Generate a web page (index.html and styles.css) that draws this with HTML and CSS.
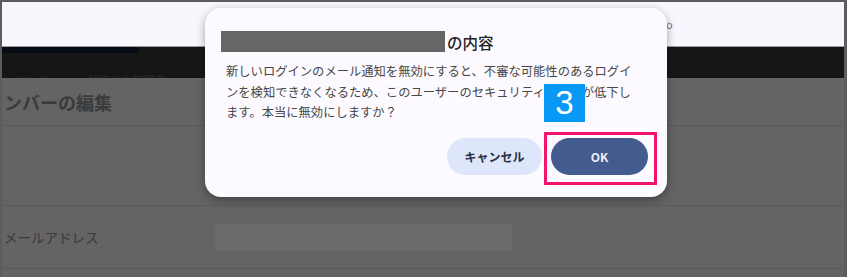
FILE: index.html
```html
<!DOCTYPE html>
<html lang="ja">
<head>
<meta charset="utf-8">
<title>メンバーの編集</title>
<link rel="stylesheet" href="styles.css">
</head>
<body>
<div class="frame">
  <div class="screen">
    <div class="topbar"><span class="topbar-hint">o</span></div>
    <div class="darkband">
      <div class="logo-strip"></div>
      <div class="band-text">メンバー 招待した管理者 メンバー 通知 ログイン</div>
    </div>
    <div class="content">
      <div class="row heading-row"><h1 class="heading">メンバーの編集</h1></div>
      <div class="row blank-row"></div>
      <div class="row field-row">
        <span class="field-label">メールアドレス</span>
        <span class="field-input"></span>
      </div>
      <div class="row rest-row"></div>
    </div>
  </div>

  <div class="dialog">
    <div class="dialog-title"><span class="redact"></span><span class="title-text">の内容</span></div>
    <p class="dialog-body">新しいログインのメール通知を無効にすると、不審な可能性のあるログイ<br>ンを検知できなくなるため、このユーザーのセキュリティレベルが低下し<br>ます。本当に無効にしますか？</p>
    <div class="dialog-actions">
      <button class="btn btn-cancel">キャンセル</button>
      <button class="btn btn-ok">OK</button>
    </div>
  </div>

  <div class="step-badge">3</div>
  <div class="highlight"></div>
</div>
</body>
</html>
```

FILE: styles.css
```css
* { box-sizing: border-box; }

html, body {
  margin: 0;
  padding: 0;
  background: #5c5c5c;
  font-family: "Noto Sans CJK JP", "Noto Sans", sans-serif;
}

.frame {
  position: relative;
  width: 847px;
  height: 277px;
  overflow: hidden;
  padding: 2px 3px 0 2px;
}

.screen {
  display: flex;
  flex-direction: column;
  height: 100%;
}

.topbar {
  height: 45px;
  background: #f8f7fd;
  border-bottom: 1px solid #9c9ba2;
  position: relative;
}

.topbar-hint {
  position: absolute;
  left: 664px;
  top: 14px;
  font-size: 11px;
  color: #777;
}

.darkband {
  height: 31px;
  background: #161616;
  display: flex;
  flex-direction: column;
  justify-content: space-between;
  overflow: hidden;
}

.logo-strip {
  width: 137px;
  height: 6px;
  background: #070c17;
}

.band-text {
  height: 5px;
  overflow: hidden;
  font-size: 11px;
  line-height: 14px;
  color: #282828;
  padding-left: 10px;
  word-spacing: 30px;
  white-space: nowrap;
}

.content {
  flex: 1;
  background: #646464;
  display: flex;
  flex-direction: column;
}

.row {
  border-bottom: 1px solid #5a5a5a;
}

.heading-row {
  height: 48px;
  display: flex;
  align-items: center;
  overflow: hidden;
}

.heading {
  margin: 0 0 0 -16px;
  font-size: 18px;
  font-weight: 700;
  color: #3b3b3b;
  white-space: nowrap;
}

.blank-row {
  height: 80px;
}

.field-row {
  height: 63px;
  display: flex;
  align-items: center;
  padding-left: 2px;
}

.field-label {
  width: 211px;
  font-size: 13.5px;
  color: #3a3a3a;
}

.field-input {
  width: 297px;
  height: 27px;
  background: #6a6a6a;
}

.rest-row {
  flex: 1;
  border-bottom: none;
}

/* dialog */
.dialog {
  position: absolute;
  left: 205px;
  top: 8px;
  width: 462px;
  height: 189px;
  background: #fcfaff;
  border-radius: 16px;
  box-shadow: 0 3px 10px rgba(0, 0, 0, 0.35);
  padding: 23px 19px 0 16px;
}

.dialog-title {
  display: flex;
  align-items: center;
  height: 21px;
}

.redact {
  width: 224px;
  height: 21px;
  background: #666;
}

.title-text {
  margin-left: 2px;
  font-size: 15.5px;
  font-weight: 500;
  color: #222;
}

.dialog-body {
  margin: 9px 0 0 5px;
  font-size: 12.3px;
  line-height: 20.5px;
  color: #474747;
  white-space: nowrap;
}

.dialog-actions {
  margin-top: 15px;
  display: flex;
  justify-content: flex-end;
  gap: 9px;
}

.btn {
  height: 37px;
  border: none;
  border-radius: 19px;
  font-family: "Noto Sans CJK JP", "Noto Sans", sans-serif;
  font-size: 12px;
  font-weight: 700;
  padding: 0;
}

.btn-cancel {
  width: 95px;
  background: #dde6fa;
  color: #2b3045;
}

.btn-ok {
  width: 97px;
  background: #445b8f;
  color: #eef0f7;
}

/* annotations */
.step-badge {
  position: absolute;
  left: 544px;
  top: 84px;
  width: 41px;
  height: 38px;
  background: #0899f6;
  color: #fff;
  font-family: "Liberation Sans", Arial, sans-serif;
  font-size: 33px;
  line-height: 38px;
  text-align: center;
}

.highlight {
  position: absolute;
  left: 544px;
  top: 132px;
  width: 113px;
  height: 53px;
  border: 3px solid #f2146c;
}
```
